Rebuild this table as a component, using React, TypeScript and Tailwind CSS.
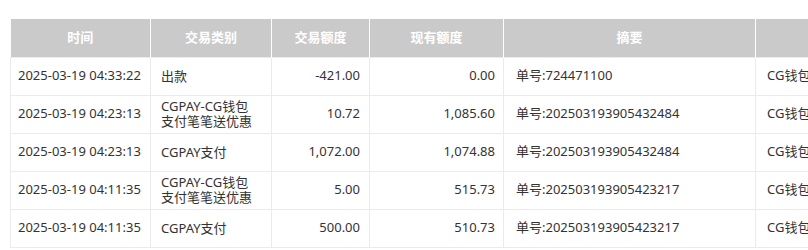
const rows = [
  { time: "2025-03-19 04:33:22", type: ["出款"], amount: "-421.00", balance: "0.00", memo: "单号:724471100", extra: "CG钱包" },
  { time: "2025-03-19 04:23:13", type: ["CGPAY-CG钱包", "支付笔笔送优惠"], amount: "10.72", balance: "1,085.60", memo: "单号:202503193905432484", extra: "CG钱包" },
  { time: "2025-03-19 04:23:13", type: ["CGPAY支付"], amount: "1,072.00", balance: "1,074.88", memo: "单号:202503193905432484", extra: "CG钱包" },
  { time: "2025-03-19 04:11:35", type: ["CGPAY-CG钱包", "支付笔笔送优惠"], amount: "5.00", balance: "515.73", memo: "单号:202503193905423217", extra: "CG钱包" },
  { time: "2025-03-19 04:11:35", type: ["CGPAY支付"], amount: "500.00", balance: "510.73", memo: "单号:202503193905423217", extra: "CG钱包" },
];

const headers = ["时间", "交易类别", "交易额度", "现有额度", "摘要", ""];

export default function App() {
  return (
    <div
      className="h-[250px] w-[808px] overflow-hidden bg-white pl-[10px] pt-[19px]"
      style={{ fontFamily: '"Noto Sans", "Noto Sans CJK SC", sans-serif' }}
    >
      <table className="w-[900px] table-fixed border-collapse text-[13px] text-[#333]">
        <colgroup>
          <col className="w-[140px]" />
          <col className="w-[121px]" />
          <col className="w-[98px]" />
          <col className="w-[134px]" />
          <col className="w-[252px]" />
          <col className="w-[155px]" />
        </colgroup>
        <thead>
          <tr className="h-[38px] bg-[#cacaca]">
            {headers.map((h, i) => (
              <th
                key={i}
                className="border-r border-white p-0 text-center font-bold text-white"
              >
                {h}
              </th>
            ))}
          </tr>
        </thead>
        <tbody>
          {rows.map((r, i) => (
            <tr key={i} className="h-[38px]">
              <td className="overflow-visible whitespace-nowrap border border-[#ebebeb] pl-[7px] pr-0">{r.time}</td>
              <td className="border border-[#ebebeb] pl-[10px] leading-[15px]">
                {r.type.map((t, j) => (
                  <div key={j}>{t}</div>
                ))}
              </td>
              <td className="border border-[#ebebeb] pr-[9px] text-right">{r.amount}</td>
              <td className="border border-[#ebebeb] pr-[8px] text-right">{r.balance}</td>
              <td className="border border-[#ebebeb] pl-[12px]">{r.memo}</td>
              <td className="border border-[#ebebeb] pl-[11px]">{r.extra}</td>
            </tr>
          ))}
        </tbody>
      </table>
    </div>
  );
}
